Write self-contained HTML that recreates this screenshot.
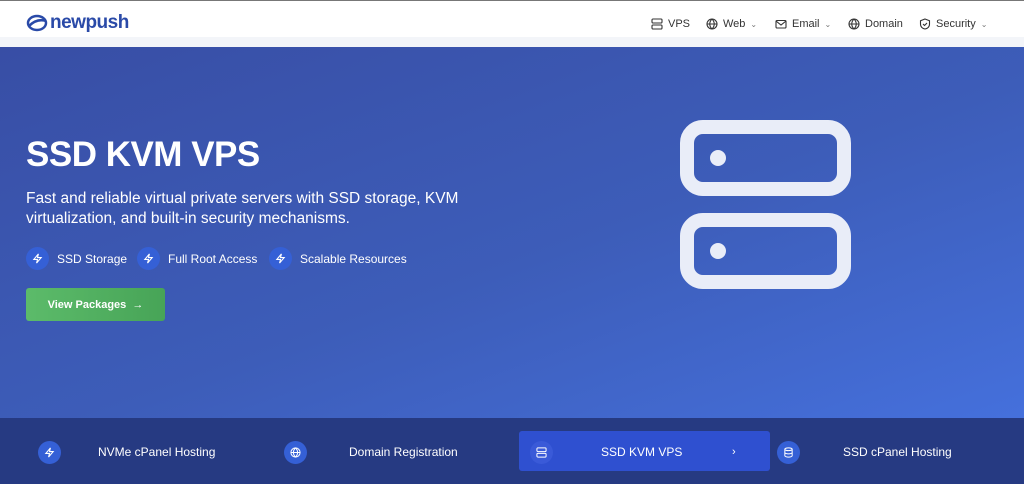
<!DOCTYPE html>
<html><head><meta charset="utf-8"><style>
*{margin:0;padding:0;box-sizing:border-box}
body{width:1024px;height:484px;overflow:hidden;font-family:"Liberation Sans",sans-serif;background:#fff;position:relative}
.top{position:absolute;left:0;top:0;width:1024px;height:1px;background:#777}
.hdr{position:absolute;left:0;top:1px;width:1024px;height:36px;background:#fff}
.strip{position:absolute;left:0;top:37px;width:1024px;height:10px;background:#f3f5f9}
.logo{position:absolute;left:26px;top:12px;display:flex;align-items:center;color:#2a4aa8;font-weight:bold;font-size:19px;letter-spacing:-0.5px}
.nav{position:absolute;top:18px;display:flex;align-items:center;font-size:11px;color:#333}
.nav svg{margin-right:5px}
.hero{position:absolute;left:0;top:47px;width:1024px;height:371px;background:linear-gradient(160deg,#384ea5 0%,#3d5db9 55%,#4570dc 100%)}
h1{position:absolute;left:26px;top:135px;color:#fff;font-size:35px;font-weight:bold;letter-spacing:-0.5px}
p.d{position:absolute;left:26px;top:189px;color:#fff;font-size:15.5px;line-height:20px;width:450px}
.badge{position:absolute;top:247px;display:flex;align-items:center;color:#fff;font-size:12px}
.bi{width:23px;height:23px;border-radius:50%;background:#3560d6;display:flex;align-items:center;justify-content:center;margin-right:8px}
.btn{position:absolute;left:26px;top:288px;width:139px;height:33px;border-radius:3px;background:linear-gradient(90deg,#5cbb6a,#47a457);color:#fff;font-size:11px;font-weight:bold;display:flex;align-items:center;justify-content:center}
.bar{position:absolute;left:0;top:418px;width:1024px;height:66px;background:#263a82}
.it{position:absolute;top:13px;height:40px;display:flex;align-items:center;color:#fff;font-size:12px}
.ci{width:23px;height:23px;border-radius:50%;background:#3560d6;display:flex;align-items:center;justify-content:center;position:absolute;left:0;top:9px}
.act{position:absolute;left:519px;top:431px;width:251px;height:40px;background:#2f50d0;border-radius:3px}
</style></head><body>
<div class="top"></div>
<div class="hdr"></div>
<div class="strip"></div>
<div class="logo">
<svg width="22" height="18" viewBox="0 0 22 18"><ellipse cx="11" cy="9" rx="9" ry="7" fill="none" stroke="#2a4aa8" stroke-width="2.5"/><path d="M3 12 Q11 4 20 7" fill="none" stroke="#2a4aa8" stroke-width="2.5"/></svg>
<span style="margin-left:2px">newpush</span></div>
<div class="nav" style="left:651px"><svg width="12" height="12" viewBox="0 0 12 12" fill="none" stroke="#333" stroke-width="1.1"><rect x="1" y="1" width="10" height="4" rx="1"/><rect x="1" y="7" width="10" height="4" rx="1"/></svg>VPS</div>
<div class="nav" style="left:706px"><svg width="12" height="12" viewBox="0 0 12 12" fill="none" stroke="#333" stroke-width="1.1"><circle cx="6" cy="6" r="5"/><path d="M1 6h10M6 1c-3 3-3 7 0 10M6 1c3 3 3 7 0 10"/></svg>Web <span style="margin-left:5px;font-size:8px;color:#777">⌄</span></div>
<div class="nav" style="left:775px"><svg width="12" height="12" viewBox="0 0 12 12" fill="none" stroke="#333" stroke-width="1.1"><rect x="1" y="2.5" width="10" height="7.5" rx="1"/><path d="M1 3l5 4 5-4"/></svg>Email <span style="margin-left:5px;font-size:8px;color:#777">⌄</span></div>
<div class="nav" style="left:848px"><svg width="12" height="12" viewBox="0 0 12 12" fill="none" stroke="#333" stroke-width="1.1"><circle cx="6" cy="6" r="5"/><path d="M1 6h10M6 1c-3 3-3 7 0 10M6 1c3 3 3 7 0 10"/></svg>Domain</div>
<div class="nav" style="left:919px"><svg width="12" height="12" viewBox="0 0 12 12" fill="none" stroke="#333" stroke-width="1.1"><path d="M6 1l4.5 1.8v3.4c0 2.6-2 4.2-4.5 4.8-2.5-.6-4.5-2.2-4.5-4.8V2.8z"/><path d="M4 6l1.5 1.5L8 5"/></svg>Security <span style="margin-left:5px;font-size:8px;color:#777">⌄</span></div>
<div class="hero">
<svg style="position:absolute;left:673px;top:66px" width="185" height="185" viewBox="0 0 185 185" fill="none" stroke="#e9edf8" stroke-width="14"><rect x="14" y="14" width="157" height="62" rx="16"/><rect x="14" y="107" width="157" height="62" rx="16"/><circle cx="45" cy="45" r="8" fill="#e9edf8" stroke="none"/><circle cx="45" cy="138" r="8" fill="#e9edf8" stroke="none"/></svg>
</div>
<h1>SSD KVM VPS</h1>
<p class="d">Fast and reliable virtual private servers with SSD storage, KVM virtualization, and built-in security mechanisms.</p>
<div class="badge" style="left:26px"><div class="bi"><svg width="11" height="11" viewBox="0 0 12 12" fill="none" stroke="#fff" stroke-width="1.2"><path d="M7 1L2 7h4l-1 4 5-6H6z"/></svg></div>SSD Storage</div>
<div class="badge" style="left:137px"><div class="bi"><svg width="11" height="11" viewBox="0 0 12 12" fill="none" stroke="#fff" stroke-width="1.2"><path d="M7 1L2 7h4l-1 4 5-6H6z"/></svg></div>Full Root Access</div>
<div class="badge" style="left:269px"><div class="bi"><svg width="11" height="11" viewBox="0 0 12 12" fill="none" stroke="#fff" stroke-width="1.2"><path d="M7 1L2 7h4l-1 4 5-6H6z"/></svg></div>Scalable Resources</div>
<div class="btn">View Packages &nbsp;→</div>
<div class="bar"></div>
<div class="act"></div>
<div class="it" style="left:38px;top:432px;width:200px"><div class="ci"><svg width="11" height="11" viewBox="0 0 12 12" fill="none" stroke="#fff" stroke-width="1.2"><path d="M7 1L2 7h4l-1 4 5-6H6z"/></svg></div><span style="margin-left:60px">NVMe cPanel Hosting</span></div>
<div class="it" style="left:284px;top:432px;width:200px"><div class="ci"><svg width="11" height="11" viewBox="0 0 12 12" fill="none" stroke="#fff" stroke-width="1.1"><circle cx="6" cy="6" r="5"/><path d="M1 6h10M6 1c-3 3-3 7 0 10M6 1c3 3 3 7 0 10"/></svg></div><span style="margin-left:65px">Domain Registration</span></div>
<div class="it" style="left:530px;top:432px;width:230px"><div class="ci" style="background:#3a5ad8"><svg width="11" height="11" viewBox="0 0 12 12" fill="none" stroke="#fff" stroke-width="1.1"><rect x="1" y="1" width="10" height="4" rx="1"/><rect x="1" y="7" width="10" height="4" rx="1"/></svg></div><span style="margin-left:71px">SSD KVM VPS</span><span style="position:absolute;left:202px;font-size:11px">›</span></div>
<div class="it" style="left:777px;top:432px;width:200px"><div class="ci"><svg width="11" height="11" viewBox="0 0 12 12" fill="none" stroke="#fff" stroke-width="1.1"><ellipse cx="6" cy="2.5" rx="4" ry="1.5"/><path d="M2 2.5v7c0 .8 1.8 1.5 4 1.5s4-.7 4-1.5v-7M2 6c0 .8 1.8 1.5 4 1.5s4-.7 4-1.5"/></svg></div><span style="margin-left:66px">SSD cPanel Hosting</span></div>
</body></html>
